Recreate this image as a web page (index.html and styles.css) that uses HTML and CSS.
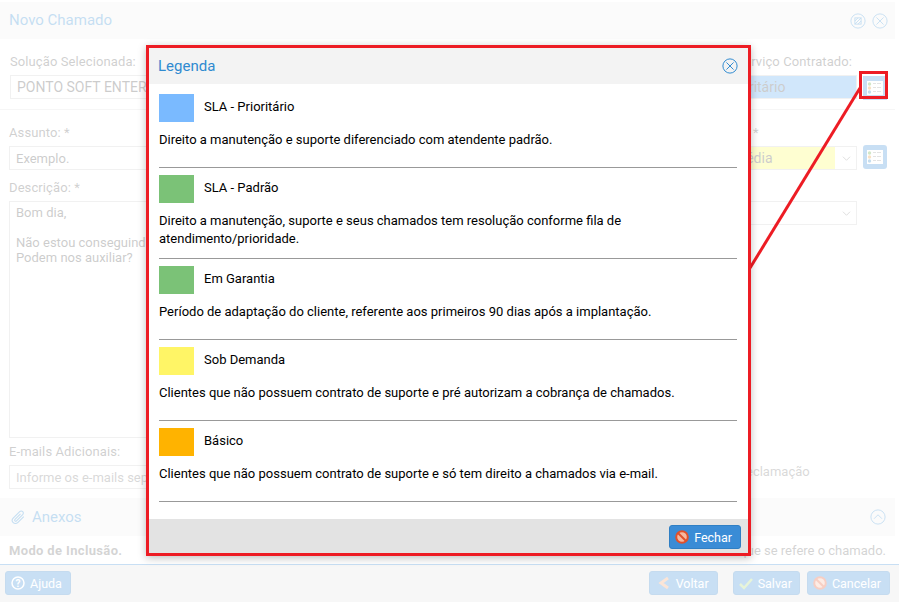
FILE: index.html
```html
<!DOCTYPE html>
<html lang="pt-BR">
<head>
    <meta charset="UTF-8">
    <title>Novo Chamado</title>
    <link rel="stylesheet" href="styles.css">
</head>
<body>

<!-- janela de fundo -->
<div class="window">
    <div class="win-header">
        <h1>Novo Chamado</h1>
        <div class="win-icons">
            <svg class="round-icon" viewBox="0 0 18 18"><circle cx="9" cy="9" r="8"/><rect x="5.5" y="5.5" width="7" height="7"/><path d="M5.5 12.5l7-7M5.5 9l3.5-3.5M9 12.5l3.5-3.5"/></svg>
            <svg class="round-icon" viewBox="0 0 18 18"><circle cx="9" cy="9" r="8"/><path d="M5 5l8 8M13 5l-8 8"/></svg>
        </div>
    </div>

    <div class="form-row first">
        <div class="col-left">
            <label>Solução Selecionada:</label>
            <div class="field">PONTO SOFT ENTERPRISE</div>
        </div>
        <div class="col-right">
            <label>Nível de Serviço Contratado:</label>
            <div class="field field-blue">SLA - Prioritário</div>
        </div>
        <div class="side-btn flat">
            <svg class="legend-icon" viewBox="0 0 16 14"><use href="#legend"/></svg>
        </div>
    </div>

    <div class="form-row second">
        <div class="col-left">
            <label>Assunto: *</label>
            <div class="field">Exemplo.</div>
        </div>
        <div class="col-right">
            <label>Prioridade: *</label>
            <div class="field select">
                <span class="select-value">SLA - Média</span>
                <svg class="chevron" viewBox="0 0 12 7"><path d="M1 1l5 5 5-5"/></svg>
            </div>
        </div>
        <div class="side-btn">
            <svg class="legend-icon" viewBox="0 0 16 14"><use href="#legend"/></svg>
        </div>
    </div>

    <div class="form-row third">
        <div class="col-left">
            <label>Descrição: *</label>
            <div class="field textarea">Bom dia,<br><br>Não estou conseguindo acessar o sistema.<br>Podem nos auxiliar?</div>
        </div>
        <div class="col-right">
            <label>Tipo: *</label>
            <div class="field select">
                <span class="select-empty"></span>
                <svg class="chevron" viewBox="0 0 12 7"><path d="M1 1l5 5 5-5"/></svg>
            </div>
        </div>
        <div class="side-spacer"></div>
    </div>

    <div class="form-row fourth">
        <div class="col-left">
            <label>E-mails Adicionais:</label>
            <div class="field muted">Informe os e-mails separados por ponto e vírgula</div>
        </div>
        <div class="col-right">
            <div class="radio-line">Reclamação</div>
        </div>
        <div class="side-spacer"></div>
    </div>

    <div class="section-bar">
        <div class="section-title">
            <svg class="clip" viewBox="0 0 18 18"><path d="M15.5 8.5l-6.8 6.8a3.6 3.6 0 0 1-5.1-5.1l7.3-7.3a2.4 2.4 0 0 1 3.4 3.4l-7 7a1.2 1.2 0 0 1-1.7-1.7l6.2-6.2"/></svg>
            <span>Anexos</span>
        </div>
        <svg class="round-icon" viewBox="0 0 18 18"><circle cx="9" cy="9" r="8"/><path d="M4.5 11l4.5-4.5 4.5 4.5"/></svg>
    </div>

    <div class="mode-row">
        <strong>Modo de Inclusão.</strong>
        <span>Informe a que se refere o chamado.</span>
    </div>

    <div class="footer">
        <button class="btn">
            <svg class="btn-icon" viewBox="0 0 14 14"><circle cx="7" cy="7" r="6" class="help"/><text x="7" y="10.5" text-anchor="middle" class="help-mark">?</text></svg>
            Ajuda
        </button>
        <div class="footer-right">
            <button class="btn back-btn">
                <svg class="btn-icon" viewBox="0 0 14 14"><path d="M11 2L4 7l7 5" class="back"/></svg>
                Voltar
            </button>
            <button class="btn save">
                <svg class="btn-icon" viewBox="0 0 14 14"><path d="M1 8l4 4 8-9" class="ok"/></svg>
                Salvar
            </button>
            <button class="btn">
                <svg class="btn-icon" viewBox="0 0 14 14"><use href="#forbid"/></svg>
                Cancelar
            </button>
        </div>
    </div>
</div>

<!-- camada branca sobre a janela -->
<div class="backdrop"></div>

<!-- marcação vermelha -->
<svg class="callout" viewBox="0 0 899 602">
    <path d="M860 88L750 268"/>
    <rect x="860.5" y="72.5" width="26" height="25"/>
</svg>

<!-- modal legenda -->
<div class="modal">
    <div class="modal-header">
        <h2>Legenda</h2>
        <svg class="round-icon strong" viewBox="0 0 18 18"><circle cx="9" cy="9" r="8"/><path d="M5 5l8 8M13 5l-8 8"/></svg>
    </div>
    <div class="modal-body">
        <div class="item">
            <div class="item-title"><span class="swatch blue"></span><span class="item-name">SLA - Prioritário</span></div>
            <p>Direito a manutenção e suporte diferenciado com atendente padrão.</p>
        </div>
        <div class="item">
            <div class="item-title"><span class="swatch green"></span><span class="item-name">SLA - Padrão</span></div>
            <p>Direito a manutenção, suporte e seus chamados tem resolução conforme fila de atendimento/prioridade.</p>
        </div>
        <div class="item">
            <div class="item-title"><span class="swatch green"></span><span class="item-name">Em Garantia</span></div>
            <p>Período de adaptação do cliente, referente aos primeiros 90 dias após a implantação.</p>
        </div>
        <div class="item">
            <div class="item-title"><span class="swatch yellow"></span><span class="item-name">Sob Demanda</span></div>
            <p>Clientes que não possuem contrato de suporte e pré autorizam a cobrança de chamados.</p>
        </div>
        <div class="item">
            <div class="item-title"><span class="swatch orange"></span><span class="item-name">Básico</span></div>
            <p>Clientes que não possuem contrato de suporte e só tem direito a chamados via e-mail.</p>
        </div>
    </div>
    <div class="modal-footer">
        <button class="btn">
            <svg class="btn-icon" viewBox="0 0 14 14"><use href="#forbid"/></svg>
            Fechar
        </button>
    </div>
</div>

<!-- ícones reutilizados -->
<svg class="defs" width="0" height="0">
    <symbol id="legend" viewBox="0 0 16 14">
        <rect width="16" height="14" fill="#fff"/>
        <circle cx="2.5" cy="3" r="1.7" fill="#5fa83a"/>
        <circle cx="2.5" cy="7" r="1.7" fill="#e8912a"/>
        <circle cx="2.5" cy="11" r="1.7" fill="#2f86c4"/>
        <path d="M6 2.5h3M10 2.5h4M6 6.5h3M10 6.5h4M6 10.5h3M10 10.5h4" stroke="#999" stroke-width="1"/>
    </symbol>
    <symbol id="forbid" viewBox="0 0 14 14">
        <circle cx="7" cy="7" r="5.8" fill="#f6b9a0" stroke="#e2502a" stroke-width="2"/>
        <path d="M3 3l8 8" stroke="#e2502a" stroke-width="2"/>
    </symbol>
</svg>

</body>
</html>
```

FILE: styles.css
```css
* {
    box-sizing: border-box;
}

body {
    margin: 0;
    width: 899px;
    height: 602px;
    overflow: hidden;
    background: #fff;
    font-family: Roboto, 'Liberation Sans', sans-serif;
    font-size: 13px;
    color: #333;
    position: relative;
}

.window {
    height: 602px;
    display: flex;
    flex-direction: column;
    padding-top: 2px;
    padding-right: 4px;
}

.win-header {
    height: 37px;
    flex: none;
    background: #f0f0f0;
    display: flex;
    align-items: center;
    justify-content: space-between;
    padding: 0 7px 0 9px;
}

.win-header h1 {
    margin: 0 0 2px;
    font-size: 15px;
    font-weight: 400;
    color: #2f8ad0;
}

.win-icons {
    display: flex;
    gap: 6px;
}

.round-icon {
    width: 16px;
    height: 16px;
    fill: none;
    stroke: #2f8ad0;
    stroke-width: 1;
}

.form-row {
    flex: none;
    display: flex;
    padding: 14px 8px 0 9px;
}

.col-left {
    width: 431px;
    flex: none;
}

.col-right {
    width: 171px;
    flex: none;
    margin-left: auto;
}

.form-row label {
    display: block;
    height: 22px;
    line-height: 17px;
    letter-spacing: .1px;
    white-space: nowrap;
    color: #575757;
}

.first {
    height: 71px;
    padding-left: 10px;
    border-bottom: 1px solid #ddd;
}

.second {
    height: 69px;
}

.third {
    height: 264px;
    padding-top: 0;
}

.fourth {
    height: 55px;
    padding-top: 0;
}

.field {
    height: 24px;
    border: 1px solid #ccc;
    background: #fff;
    padding: 0 6px;
    line-height: 23px;
    white-space: nowrap;
    overflow: hidden;
    color: #4a4a4a;
}

.first .field {
    font-size: 14px;
}

.field-blue {
    background: #5aa9f0;
    padding-left: 1px;
}

.select {
    display: flex;
    align-items: center;
    padding: 0 5px 0 0;
}

.select-value {
    flex: none;
    width: 148px;
    align-self: stretch;
    padding-left: 11px;
    margin-right: 7px;
    background: #fbfb5a;
    font-size: 14px;
}

.select-empty {
    flex: 1;
}

.chevron {
    width: 9px;
    height: 5px;
    flex: none;
    fill: none;
    stroke: #777;
    stroke-width: 1.2;
}

.textarea {
    height: 237px;
    line-height: 15px;
    padding-top: 3px;
}

.muted {
    color: #777;
}

.side-btn {
    flex: none;
    width: 24px;
    height: 24px;
    margin: 21px 0 0 6px;
    border-radius: 3px;
    background: #3a8cd6;
    display: flex;
    align-items: center;
    justify-content: center;
}

.side-btn.flat {
    margin-top: 23px;
    border-radius: 0;
}

.side-spacer {
    flex: none;
    width: 30px;
}

.legend-icon {
    width: 16px;
    height: 14px;
}

.radio-line {
    padding: 21px 0 0 52px;
    line-height: 16px;
    color: #777;
}

.section-bar {
    flex: none;
    height: 38px;
    background: #f0f0f0;
    display: flex;
    align-items: center;
    justify-content: space-between;
    padding: 0 9px 0 10px;
}

.section-title {
    display: flex;
    align-items: center;
    gap: 6px;
    font-size: 15px;
    color: #2f8ad0;
}

.clip {
    width: 16px;
    height: 16px;
    fill: none;
    stroke: #2f8ad0;
    stroke-width: 1.2;
}

.mode-row {
    flex: none;
    height: 28px;
    display: flex;
    align-items: center;
    justify-content: space-between;
    padding: 0 9px;
    color: #666;
}

.mode-row strong {
    letter-spacing: .35px;
}

.footer {
    flex: 1;
    margin-right: -4px;
    border-top: 1px solid #3a8cd6;
    background: #e3e3e3;
    display: flex;
    justify-content: space-between;
    padding: 6px 9px 0 5px;
}

.footer-right {
    display: flex;
    gap: 7px;
}

.btn {
    height: 24px;
    padding: 0 8px 0 5px;
    border: 1px solid #2f7fc4;
    border-radius: 3px;
    background: #3a8cd6;
    color: #fff;
    font-family: inherit;
    font-size: 12.5px;
    display: inline-flex;
    align-items: center;
    gap: 5px;
}

.back-btn {
    padding-left: 7px;
}

.save {
    margin-left: 8px;
    padding-right: 7px;
}

.btn-icon {
    width: 14px;
    height: 14px;
}

.help {
    fill: none;
    stroke: #fff;
    stroke-width: 1.5;
}

.help-mark {
    fill: #fff;
    font-size: 10px;
    font-weight: 700;
}

.back {
    fill: none;
    stroke: #f0a070;
    stroke-width: 3;
}

.ok {
    fill: none;
    stroke: #a8d878;
    stroke-width: 2.5;
}

.backdrop {
    position: absolute;
    inset: 0;
    background: rgba(255, 255, 255, .72);
}

.callout {
    position: absolute;
    left: 0;
    top: 0;
    width: 899px;
    height: 602px;
    fill: none;
    stroke: #ed1c24;
    stroke-width: 3;
}

.modal {
    position: absolute;
    left: 146px;
    top: 45px;
    width: 605px;
    height: 511px;
    border: 3px solid #ed1c24;
    background: #fff;
    display: flex;
    flex-direction: column;
    box-shadow: 0 2px 8px rgba(0, 0, 0, .25);
}

.modal-header {
    flex: none;
    height: 36px;
    background: #f3f3f3;
    display: flex;
    align-items: center;
    justify-content: space-between;
    padding: 0 10px 0 9px;
}

.modal-header h2 {
    margin: 0;
    font-size: 15px;
    font-weight: 400;
    color: #2f8ad0;
}

.round-icon.strong {
    stroke-width: 1.1;
}

.modal-body {
    flex: 1;
    padding: 10px 11px 0 10px;
    color: #000;
}

.item {
    border-bottom: 1px solid #999;
    margin-bottom: 7px;
    padding-bottom: 10px;
}

.item-title {
    display: flex;
    align-items: center;
    gap: 10px;
    height: 28px;
}

.item-name {
    margin-bottom: 4px;
}

.swatch {
    width: 35px;
    height: 28px;
}

.swatch.blue {
    background: #7abaff;
}

.swatch.green {
    background: #7bc277;
}

.swatch.yellow {
    background: #fff566;
}

.swatch.orange {
    background: #ffb300;
}

.item p {
    margin: 9px 0 0;
    line-height: 18px;
    min-height: 26px;
}

.modal-footer {
    flex: none;
    height: 34px;
    background: #e3e3e3;
    display: flex;
    justify-content: flex-end;
    align-items: flex-start;
    padding: 6px 7px 0 0;
}

.defs {
    position: absolute;
}
```
